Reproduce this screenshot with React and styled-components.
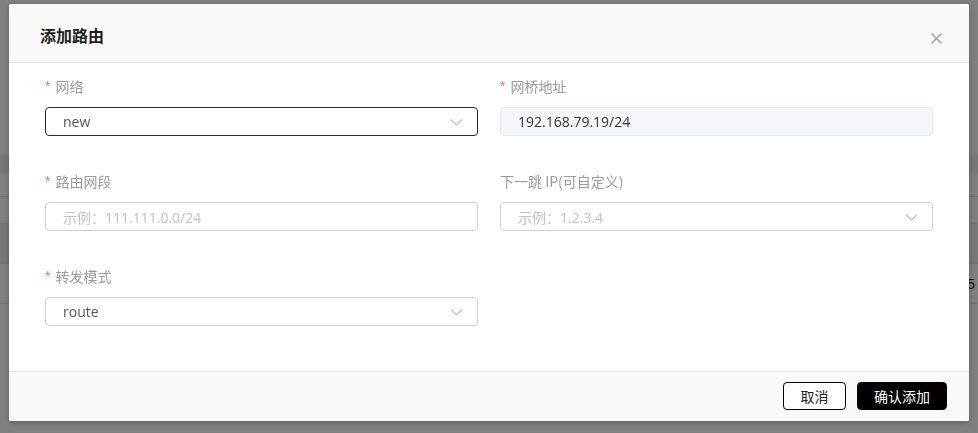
import React from "react"
import styled, { createGlobalStyle } from "styled-components"

const GlobalStyle = createGlobalStyle`
  html, body {
    margin: 0;
    padding: 0;
    width: 978px;
    height: 433px;
    overflow: hidden;
    background: #fff;
    font-family: "Open Sans", "Noto Sans CJK SC", sans-serif;
  }
  * { box-sizing: border-box; }
`

// faint page behind the mask
const Page = styled.div`
  width: 978px;
  height: 433px;
  background: #ffffff;
  padding-top: 155px;
`
const TableHead = styled.div`
  height: 18px;
  background: #ededed;
`
const TableRow = styled.div`
  height: ${(p) => p.h}px;
  border-bottom: 1px solid #dcdcdc;
  background: ${(p) => (p.shade ? "#f0f0f0" : "#fff")};
  display: flex;
  justify-content: flex-end;
  align-items: center;
  padding-right: 3px;
  font-family: "Liberation Sans", sans-serif;
  font-size: 14px;
  color: #222;
`

const Mask = styled.div`
  position: fixed;
  inset: 0;
  background: rgba(0, 0, 0, 0.5);
`

const Dialog = styled.div`
  position: absolute;
  left: 9px;
  top: 4px;
  width: 960px;
  height: 417px;
  background: #fff;
  border-radius: 2px;
  box-shadow: 0 2px 6px rgba(0, 0, 0, 0.25);
  display: flex;
  flex-direction: column;
  overflow: hidden;
`

const Header = styled.div`
  height: 59px;
  flex: none;
  background: #fafafa;
  border-bottom: 1px solid #e6e6e6;
  display: flex;
  align-items: center;
  justify-content: space-between;
  padding: 4px 26px 0 31px;
`
const Title = styled.h2`
  margin: 0;
  font-size: 16px;
  font-weight: 700;
  color: #1e1e1e;
  font-family: "Noto Sans CJK SC", sans-serif;
`
const Close = styled.button`
  border: 0;
  background: none;
  padding: 0;
  width: 14px;
  height: 14px;
  margin-top: 6px;
  display: flex;
  align-items: center;
  justify-content: center;
  color: #9a9a9a;
  cursor: pointer;
`

const Body = styled.div`
  flex: 1;
  padding: 13px 36px 0;
  display: grid;
  grid-template-columns: 433px 433px;
  column-gap: 22px;
  align-content: start;
`

const Item = styled.div`
  display: flex;
  flex-direction: column;
  margin-bottom: 35px;
`
const Label = styled.label`
  height: 20px;
  line-height: 20px;
  font-size: 14px;
  color: #9b9b9b;
  margin-bottom: 11px;
  font-family: "Noto Sans CJK SC", sans-serif;
  display: flex;
  align-items: center;
`
const Star = styled.span`
  color: #f56c6c;
  margin-right: 5px;
  font-family: "Liberation Sans", sans-serif;
`

const Field = styled.div`
  height: 29px;
  border: 1px solid ${(p) => (p.active ? "#2b2b2b" : p.disabled ? "#e6e8ef" : "#cfcfcf")};
  background: ${(p) => (p.disabled ? "#f5f6fa" : "#fff")};
  border-radius: 4px;
  display: flex;
  align-items: center;
  justify-content: space-between;
  padding: 0 14px 0 17px;
  font-size: 14px;
  color: ${(p) => (p.placeholder ? "#c2c2c2" : p.disabled ? "#333" : "#555")};
`
const Chevron = () => (
  <svg width="13" height="8" viewBox="0 0 13 8" fill="none">
    <path d="M1 1.5l5.5 5.5 5.5-5.5" stroke="#bdbdbd" strokeWidth="1.2" />
  </svg>
)

const Footer = styled.div`
  height: 50px;
  flex: none;
  background: #fafafa;
  border-top: 1px solid #e6e6e6;
  display: flex;
  align-items: center;
  justify-content: flex-end;
  gap: 11px;
  padding: 0 22px 1px 0;
`
const Button = styled.button`
  height: 28px;
  width: ${(p) => p.w}px;
  border-radius: 4px;
  border: 1px solid #000;
  background: ${(p) => (p.primary ? "#000" : "#fff")};
  color: ${(p) => (p.primary ? "#fff" : "#222")};
  font-size: 14px;
  font-family: "Noto Sans CJK SC", sans-serif;
  cursor: pointer;
  padding: 0;
`

const fields = [
  { label: "网络", required: true, value: "new", active: true, chevron: true },
  { label: "网桥地址", required: true, value: "192.168.79.19/24", disabled: true },
  { label: "路由网段", required: true, placeholder: "示例：111.111.0.0/24" },
  { label: "下一跳 IP(可自定义)", placeholder: "示例：1.2.3.4", chevron: true },
  { label: "转发模式", required: true, value: "route", chevron: true },
]

function App() {
  return (
    <>
      <GlobalStyle />
      <Page>
        <TableHead />
        <TableRow h={24} />
        <TableRow h={27} />
        <TableRow h={40} shade />
        <TableRow h={40}>5</TableRow>
      </Page>
      <Mask>
        <Dialog>
          <Header>
            <Title>添加路由</Title>
            <Close aria-label="close">
              <svg width="11" height="11" viewBox="0 0 11 11">
                <path d="M0.5 0.5l10 10M10.5 0.5l-10 10" stroke="currentColor" strokeWidth="1.2" />
              </svg>
            </Close>
          </Header>
          <Body>
            {fields.map((f) => (
              <Item key={f.label}>
                <Label>
                  {f.required && <Star>*</Star>}
                  {f.label}
                </Label>
                <Field active={f.active} disabled={f.disabled} placeholder={f.placeholder ? 1 : 0}>
                  <span>{f.value || f.placeholder}</span>
                  {f.chevron && <Chevron />}
                </Field>
              </Item>
            ))}
          </Body>
          <Footer>
            <Button w={63}>取消</Button>
            <Button w={90} primary>
              确认添加
            </Button>
          </Footer>
        </Dialog>
      </Mask>
    </>
  )
}

export default App
